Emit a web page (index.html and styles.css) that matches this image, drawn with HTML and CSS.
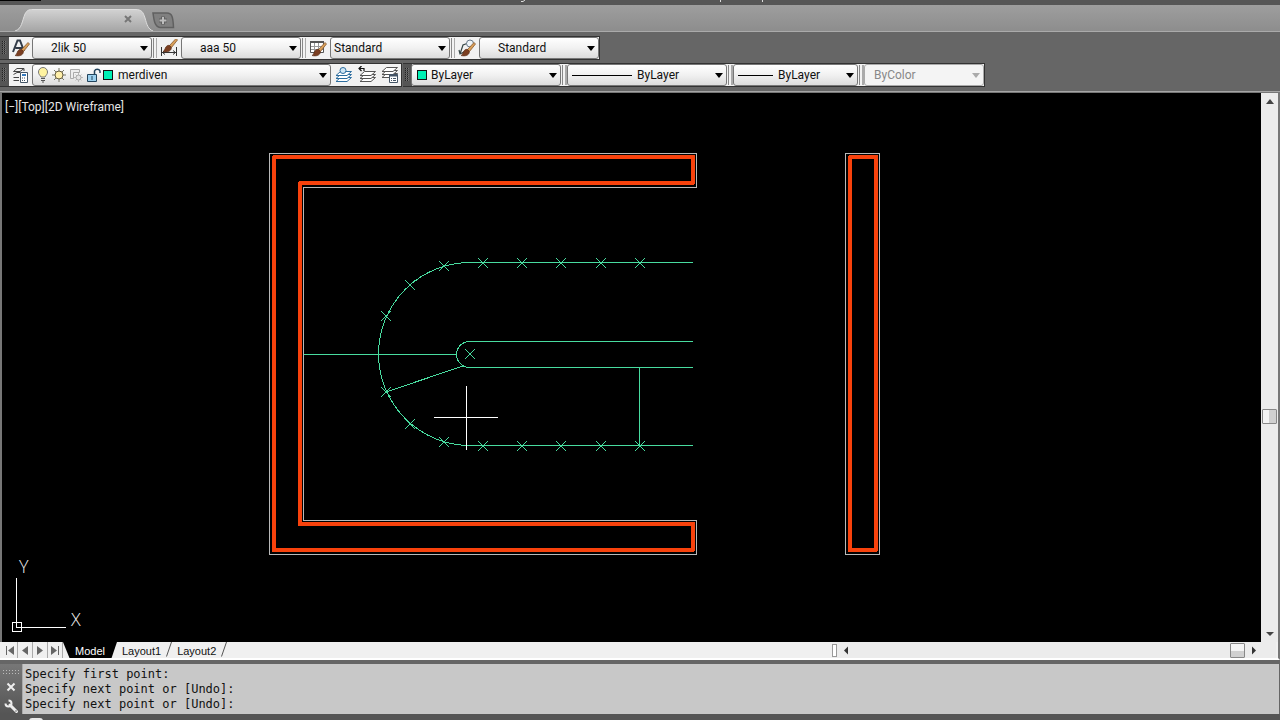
FILE: index.html
```html
<!DOCTYPE html>
<html lang="en">
<head>
<meta charset="utf-8">
<title>Drawing editor</title>
<link rel="stylesheet" href="styles.css">
</head>
<body>
<svg class="defs" width="0" height="0" aria-hidden="true">
  <defs>
    <g id="brush">
      <path d="M8.500 8.500 15 1.500 16.500 3 10.500 10.500Z" fill="#d9a05a" stroke="#7a4a22" stroke-width=".7"/>
      <path d="M2 14.500C4.500 13.500 3.500 10 6.500 8.500 8.500 7.800 11 9.800 10.200 12 9 15 5 15.300 2 14.500Z" fill="#7b3f22" stroke="#552a14" stroke-width=".6"/>
    </g>
    <g id="layers" fill="#fff">
      <path d="M5.500 11.500H16.500L12 15.500H1Z"/><path d="M5.500 8.500H16.500L12 12.500H1Z"/><path d="M5.500 5.500H16.500L12 9.500H1Z"/>
    </g>
    <path id="mark" d="M-5 -5 5 5M-5 5 5 -5"/>
  </defs>
</svg>

<div class="titlebar"><svg width="1280" height="5" aria-hidden="true"><path d="M0 0H41V1H0Z" fill="#000"/><path d="M521 1.500H523L525 0M720.500 0V2M762.500 0V2" stroke="#ddd" fill="none"/></svg></div>

<nav class="filetabs" aria-label="Open drawings">
  <svg class="filetab" width="138" height="22" viewBox="0 0 138 22" aria-hidden="true">
    <defs><linearGradient id="tabfill" x2="0" y2="1"><stop stop-color="#d2d2d2"/><stop offset="1" stop-color="#a6a6a6"/></linearGradient></defs>
    <path d="M0 22C7 20 7 12 10 5 12 1 14 .5 18 .5H120C127 .5 128 3 130 9 132 16 133 20 138 22Z" fill="url(#tabfill)"/>
    <path d="M0 22C7 20 7 12 10 5 12 1 14 .5 18 .5H120C127 .5 128 3 130 9 132 16 133 20 138 22" fill="none" stroke="#dedede"/>
  </svg>
  <button class="close-tab" aria-label="Close drawing"><svg width="8" height="8"><path d="M1 1 7 7M7 1 1 7" stroke="#777" stroke-width="2"/></svg></button>
  <button class="new-tab" aria-label="New drawing"><svg width="23" height="17"><path d="M1 1H15C20 1 21 5 21.500 15.500H8C3 15 2 9 1 1Z" fill="#808080" stroke="#606060" stroke-width="1.500"/><path d="M11 4.500V12.500M7 8.500H15" stroke="#606060" stroke-width="4"/><path d="M11 5V12M7.500 8.500H14.500" stroke="#bdbdbd" stroke-width="2"/></svg></button>
</nav>

<div class="toolbars">
  <div class="row">
    <div class="bar" role="toolbar" aria-label="Styles">
      <i class="grip"></i>
      <button class="tool" aria-label="Text style"><svg width="18" height="18"><path d="M1 13 5.500 1.500H8L12 12M3.500 9H10" fill="none" stroke="#333c48" stroke-width="2"/><use href="#brush" x="1" y="2"/></svg></button>
      <span class="combo"><select class="indent" aria-label="Text style name"><option>2lik 50</option></select><b class="arrow"></b></span>
      <i class="sep"></i>
      <button class="tool wide" aria-label="Dimension style"><svg width="18" height="18"><path d="M1.500 8V17M16.500 8V17M2 13.500H16M5 11.500 2.500 13.500 5 15.500M13 11.500 15.500 13.500 13 15.500" fill="none" stroke="#333"/><use href="#brush" x="1" y="-2"/></svg></button>
      <span class="combo"><select class="indent" aria-label="Dimension style name"><option>aaa 50</option></select><b class="arrow"></b></span>
      <i class="sep"></i>
      <button class="tool wide" aria-label="Table style"><svg width="18" height="18"><path d="M1.500 2.500H14.500V13.500H1.500Z" fill="#fff" stroke="#555"/><path d="M1 3H15" stroke="#555" stroke-width="2"/><path d="M2 7.500H14M2 10.500H14M5.500 4V13M9.500 4V13" stroke="#999"/><use href="#brush" x="1" y="2"/></svg></button>
      <span class="combo"><select aria-label="Table style name"><option>Standard</option></select><b class="arrow"></b></span>
      <i class="sep"></i>
      <button class="tool wide" aria-label="Multileader style"><svg width="18" height="18"><path d="M2 15 5 6 9 4.500M1 11 2 15 6 13" fill="none" stroke="#344" stroke-width="1.200"/><circle cx="12" cy="4.500" r="3.500" fill="#eef4f8" stroke="#678"/><use href="#brush" x="1" y="2"/></svg></button>
      <span class="combo"><select class="indent" aria-label="Multileader style name"><option>Standard</option></select><b class="arrow"></b></span>
    </div>
  </div>
  <div class="row">
    <div class="bar" role="toolbar" aria-label="Layers">
      <i class="grip"></i>
      <button class="tool" aria-label="Layer properties"><svg width="18" height="18"><path d="M5 2.500H12L8 5.500H1.500ZM1.500 8.500 5 6.500H8M1.500 11.500H7M1.500 14.500H7M12 2.500V5" fill="none" stroke="#444"/><path d="M8.500 6.500H15.500V16.500H8.500Z" fill="#fff" stroke="#456"/><path d="M10 9H14" stroke="#357abd" stroke-width="2"/><path d="M10 12H14M10 14.500H14" stroke="#456" stroke-dasharray="1 1"/></svg></button>
      <span class="combo layer">
        <select aria-label="Current layer"><option>merdiven</option></select>
        <span class="state" aria-hidden="true">
          <svg width="12" height="16"><path d="M4 10C3 8 1.500 7.500 1.500 5A4.500 4.500 0 0 1 10.500 5C10.500 7.500 9 8 8 10Z" fill="#fff3a0" stroke="#777"/><path d="M4 11.500H8M4 13.500H8M5 15H7" stroke="#555"/></svg>
          <svg width="14" height="16"><path d="M7 1V15M0 8H14M2 3 12 13M12 3 2 13" stroke="#776"/><circle cx="7" cy="8" r="4" fill="#ffefaa" stroke="#665d40"/></svg>
          <svg width="14" height="16"><path d="M1.500 2.500H10.500V5.500H4.500V11.500H1.500Z" fill="#eee" stroke="#aaa"/><path d="M9.500 6V15M5 10.500H14M6.500 7.500 12.500 13.500M12.500 7.500 6.500 13.500" stroke="#bbb"/><circle cx="9.500" cy="10.500" r="2.500" fill="#e4e4e4" stroke="#aaa"/></svg>
          <svg width="15" height="16"><path d="M8.500 7V4A3 3 0 0 1 14 4V6" fill="none" stroke="#23445d" stroke-width="1.500"/><path d="M1.500 7.500H10.500V14.500H1.500Z" fill="#9bd0ee" stroke="#23445d"/><path d="M6 9V13" stroke="#23445d"/></svg>
          <i class="swatch"></i>
        </span>
        <b class="arrow"></b>
      </span>
      <button class="tool" aria-label="Make object layer current"><svg width="18" height="18"><use href="#layers" stroke="#2d6ea0"/><circle cx="8" cy="4.500" r="3" fill="#cfe6f5" stroke="#2d6ea0"/></svg></button>
      <button class="tool" aria-label="Previous layer"><svg width="18" height="18"><use href="#layers" x="1" stroke="#555"/><path d="M1 2.500H6V5M3.500 0 1 2.500 3.500 5" fill="none" stroke="#111" stroke-width="1.200"/></svg></button>
      <button class="tool" aria-label="Layer states"><svg width="18" height="18"><use href="#layers" y="-4" stroke="#555"/><path d="M8.500 8.500H16.500V16.500H8.500Z" fill="#fff" stroke="#456"/><path d="M8 9.500H17" stroke="#456" stroke-width="2"/><path d="M10 12.500H15M10 14.500H15" stroke="#456" stroke-dasharray="1 1 3"/></svg></button>
    </div>
    <div class="bar" role="toolbar" aria-label="Properties">
      <i class="grip"></i>
      <span class="combo color"><select aria-label="Object color"><option>ByLayer</option></select><span class="state"><i class="swatch"></i></span><b class="arrow"></b></span>
      <i class="sep tight"></i>
      <span class="combo linetype"><select aria-label="Linetype"><option>ByLayer</option></select><span class="state"><i class="rule"></i></span><b class="arrow"></b></span>
      <i class="sep tight"></i>
      <span class="combo weight"><select aria-label="Lineweight"><option>ByLayer</option></select><span class="state"><i class="rule"></i></span><b class="arrow"></b></span>
      <i class="sep tight"></i>
      <span class="combo plot"><select aria-label="Plot style" disabled><option>ByColor</option></select><b class="arrow"></b></span>
    </div>
  </div>
</div>

<main class="workspace">
  <div class="view">
    <svg class="drawing" role="img" aria-label="Stair plan">
      <g transform="translate(-2 -93)" fill="none" shape-rendering="crispEdges">
        <g stroke="#b9b9b9">
          <path d="M269.500 153.500H696.500V187.500H303.500V520.500H696.500V554.500H269.500Z"/>
          <path d="M845.500 153.500H879.500V554.500H845.500Z"/>
        </g>
        <g stroke="#f8420c" stroke-width="4" stroke-linejoin="round">
          <path d="M274 157H693V183H300V524H693V550H274Z"/>
          <path d="M850 157H876V550H850Z"/>
        </g>
        <g stroke="#48dc9f">
          <path d="M693 262.500H470A91.500 91.500 0 0 0 470 445.500H693"/>
          <path d="M693 341.500H469.500A13 13 0 0 0 469.500 367.500H693"/>
          <path d="M304 354.500H457M386 392 463 366M639.500 367V446"/>
          <use href="#mark" x="444" y="266"/><use href="#mark" x="483" y="263"/><use href="#mark" x="522" y="263"/><use href="#mark" x="561" y="263"/><use href="#mark" x="601" y="263"/><use href="#mark" x="640" y="263"/>
          <use href="#mark" x="410" y="285"/><use href="#mark" x="386" y="316"/><use href="#mark" x="470" y="354"/><use href="#mark" x="386" y="392"/><use href="#mark" x="410" y="424"/>
          <use href="#mark" x="444" y="442"/><use href="#mark" x="483" y="446"/><use href="#mark" x="522" y="446"/><use href="#mark" x="561" y="446"/><use href="#mark" x="601" y="446"/><use href="#mark" x="640" y="446"/>
        </g>
        <path d="M466.500 386V450M434 417.500H498" stroke="#fff"/>
      </g>
    </svg>
    <button class="viewlabel">[−][Top][2D Wireframe]</button>
    <svg class="ucs" width="90" height="90" aria-label="Coordinate axes">
      <path d="M14.500 26V75.500H64M10.500 70.500H19.500V79.500H10.500Z" fill="none" stroke="#fff" shape-rendering="crispEdges"/>
      <text x="17" y="21">Y</text><text x="69" y="74">X</text>
    </svg>
  </div>
  <div class="vscroll" aria-hidden="true">
    <svg width="17" height="17"><path d="M5 11 9 6 13 11Z" fill="#444"/></svg>
    <i class="thumb"></i>
    <svg width="17" height="17"><path d="M5 7H13L9 11Z" fill="#444"/></svg>
  </div>
</main>

<footer class="layoutbar">
  <div class="pager">
    <button aria-label="First layout"><svg width="12" height="11"><path d="M2.500 1V10" stroke="#666"/><path d="M10 1V10L4 5.500Z" fill="#666"/></svg></button>
    <button aria-label="Previous layout"><svg width="12" height="11"><path d="M9 1V10L3 5.500Z" fill="#666"/></svg></button>
    <button aria-label="Next layout"><svg width="12" height="11"><path d="M3 1V10L9 5.500Z" fill="#666"/></svg></button>
    <button aria-label="Last layout"><svg width="12" height="11"><path d="M9.500 1V10" stroke="#666"/><path d="M2 1V10L8 5.500Z" fill="#666"/></svg></button>
  </div>
  <button class="sheet current">Model</button>
  <button class="sheet">Layout1</button>
  <svg class="slant" width="6" height="15"><path d="M.5 14.500 5.500 0" stroke="#555"/></svg>
  <button class="sheet">Layout2</button>
  <svg class="slant" width="6" height="15"><path d="M.5 14.500 5.500 0" stroke="#555"/></svg>
  <div class="hscroll" aria-hidden="true">
    <i class="handle"></i>
    <svg width="17" height="13"><path d="M11 2.500V10.500L7 6.500Z" fill="#333"/></svg>
    <i class="thumb"></i>
    <svg width="17" height="13"><path d="M7 2.500V10.500L11 6.500Z" fill="#333"/></svg>
  </div>
</footer>

<section class="command" aria-label="Command line">
  <div class="side">
    <i class="dots"></i>
    <button aria-label="Close"><svg width="10" height="10"><path d="M1.500 1.500 8.500 8.500M8.500 1.500 1.500 8.500" stroke="#eee" stroke-width="2"/></svg></button>
    <button aria-label="Customize"><svg width="15" height="15"><path d="M6 6 12.500 12.500" stroke="#eee" stroke-width="3" stroke-linecap="round"/><path d="M4.500 1.500A3 3 0 1 1 1.500 4.500" fill="none" stroke="#eee" stroke-width="2"/><circle cx="12" cy="12" r=".8" fill="#666"/></svg></button>
  </div>
  <div class="log">
    <p>Specify first point:</p>
    <p>Specify next point or [Undo]:</p>
    <p>Specify next point or [Undo]:</p>
  </div>
</section>
<div class="prompt"><i></i></div>
</body>
</html>
```
FILE: styles.css
```css
* { box-sizing: border-box; }
body { margin: 0; height: 100vh; display: flex; flex-direction: column; overflow: hidden; background: #666; font: 12px/16px Roboto, "Noto Sans", sans-serif; color: #111; }
button { padding: 0; border: 0; background: none; font: inherit; color: inherit; display: flex; align-items: center; justify-content: center; }
svg { display: block; flex: none; }
p { margin: 0; }
.defs { position: absolute; }

.titlebar { height: 5px; flex: none; overflow: hidden; background: #565656; }
.filetabs { height: 27px; flex: none; display: flex; align-items: flex-end; padding-left: 15px; background: linear-gradient(#9e9e9e, #8d8d8d); border-bottom: 1px solid #aaa; }
.filetabs .filetab { margin-right: -29px; }
.close-tab { height: 24px; margin-right: 20px; }
.new-tab { height: 22px; }

.toolbars { flex: none; display: flex; flex-direction: column; gap: 3px; padding: 4px 0; border-bottom: 1px solid #a5a5a5; }
.row { display: flex; gap: 1px; }
.bar { height: 24px; display: flex; align-items: center; background: #f2f2f2; border: solid #333; border-width: 1px 1px 1px 0; }
.grip { width: 9px; height: 22px; border: solid #555; border-width: 3px 3px 4px 2px; background: repeating-linear-gradient(#555 0 1px, transparent 1px 2px), repeating-linear-gradient(90deg, #222 0 1px, #777 1px 2px); }
.tool { width: 23px; height: 22px; }
.tool.wide { width: 24px; }
.sep { width: 5px; height: 20px; background: linear-gradient(90deg, #f2f2f2 1px, #888 1px 2px, #f2f2f2 2px 4px, #aaa 4px); }
.sep.tight { width: 6px; }
.combo { width: 120px; height: 22px; display: grid; grid-template-columns: 1fr 16px; }
.combo select { grid-area: 1 / 1 / 2 / 3; min-width: 0; appearance: none; margin: 0; padding: 0 16px 0 3px; border: 1px solid #777; border-radius: 3px; background: linear-gradient(#fff, #f1f1f1 50%, #dcdcdc); font: inherit; color: #111; }
.combo select.indent { padding-left: 18px; }
.combo .arrow { grid-area: 1 / 2; align-self: center; justify-self: center; border: 4px solid transparent; border-top: 5px solid #000; border-bottom: 0; pointer-events: none; }
.state { grid-area: 1 / 1; display: flex; align-items: center; gap: 3px; padding-left: 5px; pointer-events: none; }
.swatch { width: 10px; height: 10px; background: #00f0b4; border: 1px solid #111; }
.layer { width: 299px; margin-right: 1px; }
.combo.layer select { padding-left: 85px; }
.layer .swatch { margin-left: -1px; }
.color { width: 150px; margin-left: -1px; }
.color .state { padding-left: 6px; }
.combo.color select { padding-left: 19px; }
.linetype { width: 160px; }
.combo.linetype select { padding-left: 69px; }
.rule { width: 60px; height: 1px; background: #000; }
.weight { width: 125px; }
.combo.weight select { padding-left: 44px; }
.weight .rule { width: 35px; }
.combo.plot select { padding-left: 9px; background: #f4f4f4; border-color: #aaa; color: #888; opacity: 1; }
.plot .arrow { border-top-color: #aaa; }

.workspace { flex: 1; min-height: 0; display: flex; border: solid #777; border-width: 1px 2px 0; }
.view { flex: 1; min-width: 0; display: grid; grid-template: 1fr / 1fr; background: #000; color: #e6e6e6; }
.view > * { grid-area: 1 / 1; }
.drawing { width: 100%; height: 100%; }
.viewlabel { place-self: start; padding: 6px 3px; }
.ucs { place-self: end start; }
.ucs text { font: 300 18px "Open Sans", sans-serif; fill: #eee; }
.vscroll { width: 17px; display: flex; flex-direction: column; background: #ececec; }
.thumb { width: 15px; height: 15px; border: 1px solid #888; border-radius: 1px; background: linear-gradient(#f4f4f4 50%, #d0d0d0 50%); }
.vscroll .thumb { margin: auto 1px 201px; background: linear-gradient(90deg, #f4f4f4 50%, #d0d0d0 50%); }

.layoutbar { height: 18px; flex: none; display: flex; align-items: flex-start; padding: 0 2px 0 3px; background: #f0f0f0; border-bottom: 2px solid #fff; border-right: 2px solid #777; font: 11px/16px "Liberation Sans", sans-serif; }
.pager { display: flex; }
.pager button { width: 15px; height: 16px; border-right: 1px solid #aaa; }
.sheet { height: 16px; padding: 1px 5px 0; }
.sheet.current { padding: 1px 12px 0; background: #000; color: #fff; clip-path: polygon(0 0, 100% 0, 90% 100%, 12% 100%); }
.hscroll { flex: 0 1 444px; margin-left: auto; padding-right: 14px; display: flex; align-items: center; height: 16px; background: #ececec; }
.hscroll .thumb { margin-left: auto; }
.handle { width: 5px; height: 13px; border: 1px solid #999; background: #fff; }

.command { flex: none; display: flex; margin-top: 4px; padding-right: 1px; }
.side { width: 22px; display: flex; flex-direction: column; align-items: center; justify-content: space-between; padding-top: 5px; background: linear-gradient(#777, #555); }
.dots { width: 18px; height: 5px; background: radial-gradient(circle, #bbb 1px, transparent 1px) 0 0 / 3px 3px; }
.log { flex: 1; padding: 3px 2px 2px; border-left: 1px solid #aaa; background: #c8c8c8; font: 12px/15px "DejaVu Sans Mono", monospace; }
.prompt { height: 6px; flex: none; overflow: hidden; padding: 4px 0 0 29px; background: #555; }
.prompt i { display: block; width: 14px; height: 8px; border-radius: 3px; background: #e8e8e8; }
```
